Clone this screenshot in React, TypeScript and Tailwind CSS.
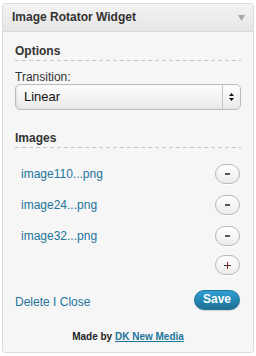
const FONT = "font-['Liberation_Sans',Arial,sans-serif]"

const IMAGES = ['image110...png', 'image24...png', 'image32...png']

function RoundButton({ children }: { children: React.ReactNode }) {
  return (
    <button className="flex items-center justify-center w-[25px] h-[20px] rounded-full border border-[#b8b8b8] bg-[linear-gradient(to_bottom,#ffffff,#ececec)] shadow-[0_1px_0_rgba(255,255,255,0.8)]">
      {children}
    </button>
  )
}

export default function App() {
  return (
    <div className={`${FONT} bg-white w-[256px] h-[356px] pt-[3px] pl-[2px]`}>
      <div className="w-[252px] h-[350px] flex flex-col border border-[#dcdcdc] rounded-[3px] bg-[#f6f6f6] overflow-hidden">
        {/* header */}
        <div className="h-[28px] shrink-0 flex items-center justify-between pl-[9px] pr-[8px] border-b border-[#dcdcdc] bg-[linear-gradient(to_bottom,#f3f3f3,#e6e6e6)]">
          <span className="text-[12px] leading-[15px] font-bold text-[#333]">Image Rotator Widget</span>
          <svg width="7" height="6" viewBox="0 0 7 6">
            <polygon points="0,0 7,0 3.5,6" fill="#a8a8a8" />
          </svg>
        </div>

        {/* body */}
        <div className="flex flex-col px-3 pt-3 text-[#333]">
          <div className="text-[12px] leading-[15px] font-bold">Options</div>
          <div className="mt-px h-px bg-[linear-gradient(to_right,#c8c8c8_4px,transparent_4px)] bg-[length:7px_1px]" />

          <div className="mt-[9px] text-[12px] leading-[14px]">Transition:</div>
          <div className="h-[26px] flex items-stretch rounded-[5px] border border-[#bdbdbd] bg-[linear-gradient(to_bottom,#fdfdfd,#e9e9e9)] shadow-[inset_1px_0_2px_rgba(0,0,0,0.08)]">
            <span className="flex-1 flex items-center pl-[8px] text-[13px] text-[#111]">Linear</span>
            <div className="w-[18px] border-l border-[#c8c8c8] flex flex-col items-center justify-center gap-[2px]">
              <svg width="5" height="3" viewBox="0 0 5 3">
                <polygon points="2.5,0 5,3 0,3" fill="#111" />
              </svg>
              <svg width="5" height="3" viewBox="0 0 5 3">
                <polygon points="0,0 5,0 2.5,3" fill="#111" />
              </svg>
            </div>
          </div>

          <div className="mt-[21px] text-[12px] leading-[15px] font-bold">Images</div>
          <div className="mt-px h-px bg-[linear-gradient(to_right,#c8c8c8_4px,transparent_4px)] bg-[length:7px_1px]" />

          <div className="mt-[10px] flex flex-col">
            {IMAGES.map((name) => (
              <div key={name} className="h-[31px] flex items-center justify-between pl-[6px] pr-[1px]">
                <a className="text-[12px] text-[#21759b]">{name}</a>
                <RoundButton>
                  <span className="block w-[5px] h-[2px] bg-[#555]" />
                </RoundButton>
              </div>
            ))}
          </div>

          <div className="mt-[4px] flex justify-end pr-[1px]">
            <RoundButton>
              <svg width="7" height="7" viewBox="0 0 7 7">
                <rect x="0" y="3" width="7" height="1" fill="#333" />
                <rect x="3" y="0" width="1" height="7" fill="#8a2222" />
              </svg>
            </RoundButton>
          </div>

          <div className="mt-[14px] flex items-center justify-between pr-[1px]">
            <div className="pt-[6px] text-[12px] leading-[15px] text-[#21759b]">
              <a>Delete</a> <span className="text-[#21759b]">I</span> <a>Close</a>
            </div>
            <button className="w-[46px] h-[20px] rounded-full bg-[linear-gradient(to_bottom,#2e9fd2,#1e6f96)] border border-[#21759b] text-white text-[12px] font-bold leading-[15px] shadow-[0_1px_1px_rgba(0,0,0,0.15)]">
              Save
            </button>
          </div>

          <div className="mt-[21px] text-center text-[10px] leading-[12px] font-bold text-[#222]">
            Made by <a className="text-[#21759b] underline">DK New Media</a>
          </div>
        </div>
      </div>
    </div>
  )
}
